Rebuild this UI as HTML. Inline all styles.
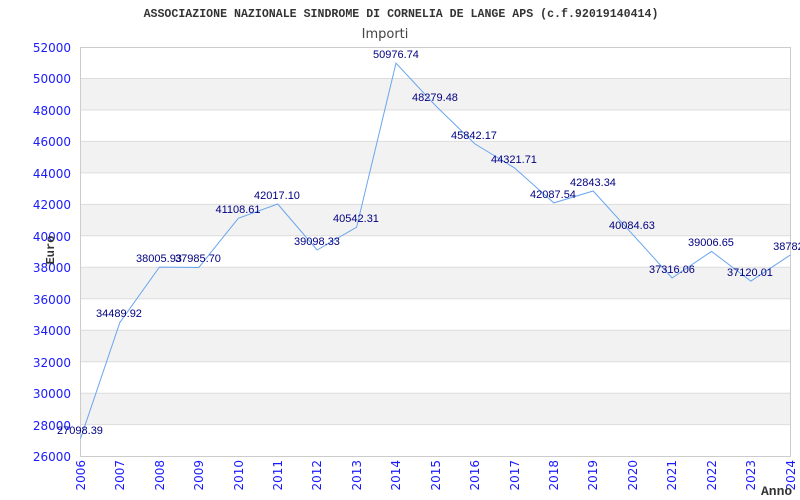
<!DOCTYPE html>
<html><head><meta charset="utf-8"><style>body{margin:0;background:#fff}svg{display:block}</style></head><body>
<svg width="800" height="500" xmlns="http://www.w3.org/2000/svg">
<rect width="800" height="500" fill="#fff"/>
<text x="401" y="17" text-anchor="middle" font-family="Liberation Mono, monospace" font-weight="bold" font-size="11.6" fill="#333">ASSOCIAZIONE NAZIONALE SINDROME DI CORNELIA DE LANGE APS (c.f.92019140414)</text>
<text x="385" y="38" text-anchor="middle" font-family="DejaVu Sans, sans-serif" font-size="13" fill="#444">Importi</text>
<g fill="#f2f2f2">
<rect x="80.5" y="78.5" width="710" height="31.5"/>
<rect x="80.5" y="141.4" width="710" height="31.5"/>
<rect x="80.5" y="204.4" width="710" height="31.5"/>
<rect x="80.5" y="267.3" width="710" height="31.5"/>
<rect x="80.5" y="330.2" width="710" height="31.5"/>
<rect x="80.5" y="393.2" width="710" height="31.5"/>
</g>
<g stroke="#ddd" stroke-width="1">
<line x1="80.5" x2="790.5" y1="78.5" y2="78.5"/><line x1="80.5" x2="790.5" y1="110" y2="110"/>
<line x1="80.5" x2="790.5" y1="141.4" y2="141.4"/><line x1="80.5" x2="790.5" y1="172.9" y2="172.9"/>
<line x1="80.5" x2="790.5" y1="204.4" y2="204.4"/><line x1="80.5" x2="790.5" y1="235.8" y2="235.8"/>
<line x1="80.5" x2="790.5" y1="267.3" y2="267.3"/><line x1="80.5" x2="790.5" y1="298.8" y2="298.8"/>
<line x1="80.5" x2="790.5" y1="330.2" y2="330.2"/><line x1="80.5" x2="790.5" y1="361.7" y2="361.7"/>
<line x1="80.5" x2="790.5" y1="393.2" y2="393.2"/><line x1="80.5" x2="790.5" y1="424.6" y2="424.6"/>
</g>
<rect x="80.5" y="47.5" width="710" height="409" fill="none" stroke="#ccc"/>
<g font-family="DejaVu Sans, sans-serif" font-size="12" fill="#1a1aff" text-anchor="end">
<text x="71" y="52">52000</text><text x="71" y="83">50000</text><text x="71" y="115">48000</text>
<text x="71" y="146">46000</text><text x="71" y="178">44000</text><text x="71" y="209">42000</text>
<text x="71" y="241">40000</text><text x="71" y="272">38000</text><text x="71" y="304">36000</text>
<text x="71" y="335">34000</text><text x="71" y="367">32000</text><text x="71" y="398">30000</text>
<text x="71" y="430">28000</text><text x="71" y="461">26000</text>
</g>
<text transform="translate(54,250) rotate(-90)" text-anchor="middle" font-family="Liberation Mono, monospace" font-weight="bold" font-size="12" fill="#333">Euro</text>
<g font-family="DejaVu Sans, sans-serif" font-size="12" fill="#1a1aff" text-anchor="end">
<text transform="translate(85,460) rotate(-90)">2006</text>
<text transform="translate(124,460) rotate(-90)">2007</text>
<text transform="translate(164,460) rotate(-90)">2008</text>
<text transform="translate(203,460) rotate(-90)">2009</text>
<text transform="translate(243,460) rotate(-90)">2010</text>
<text transform="translate(282,460) rotate(-90)">2011</text>
<text transform="translate(321,460) rotate(-90)">2012</text>
<text transform="translate(361,460) rotate(-90)">2013</text>
<text transform="translate(400,460) rotate(-90)">2014</text>
<text transform="translate(440,460) rotate(-90)">2015</text>
<text transform="translate(479,460) rotate(-90)">2016</text>
<text transform="translate(519,460) rotate(-90)">2017</text>
<text transform="translate(558,460) rotate(-90)">2018</text>
<text transform="translate(597,460) rotate(-90)">2019</text>
<text transform="translate(637,460) rotate(-90)">2020</text>
<text transform="translate(676,460) rotate(-90)">2021</text>
<text transform="translate(716,460) rotate(-90)">2022</text>
<text transform="translate(755,460) rotate(-90)">2023</text>
<text transform="translate(795,460) rotate(-90)">2024</text>
</g>
<text x="761" y="495" font-family="Liberation Mono, monospace" font-weight="bold" font-size="13" fill="#333">Anno</text>
<polyline fill="none" stroke="#6aa6ee" stroke-width="1" points="80.5,438.7 119.9,322.4 159.4,267.1 198.8,267.5 238.3,218.3 277.7,204 317.1,250 356.6,227.2 396,63.1 435.4,105.5 474.9,143.9 514.3,167.8 553.8,202.9 593.2,191 632.6,234.4 672.1,278 711.5,251.4 750.9,281.1 790.4,254.9"/>
<g font-family="Liberation Sans, sans-serif" font-size="11" fill="#000080" text-anchor="middle">
<text x="80" y="434">27098.39</text>
<text x="119" y="317">34489.92</text>
<text x="159" y="262">38005.93</text>
<text x="198" y="262">37985.70</text>
<text x="238" y="213">41108.61</text>
<text x="277" y="199">42017.10</text>
<text x="317" y="245">39098.33</text>
<text x="356" y="222">40542.31</text>
<text x="396" y="58">50976.74</text>
<text x="435" y="101">48279.48</text>
<text x="474" y="139">45842.17</text>
<text x="514" y="163">44321.71</text>
<text x="553" y="198">42087.54</text>
<text x="593" y="186">42843.34</text>
<text x="632" y="229">40084.63</text>
<text x="672" y="273">37316.06</text>
<text x="711" y="246">39006.65</text>
<text x="750" y="276">37120.01</text>
<text x="790" y="250">38782.</text>
</g>
</svg>
</body></html>
